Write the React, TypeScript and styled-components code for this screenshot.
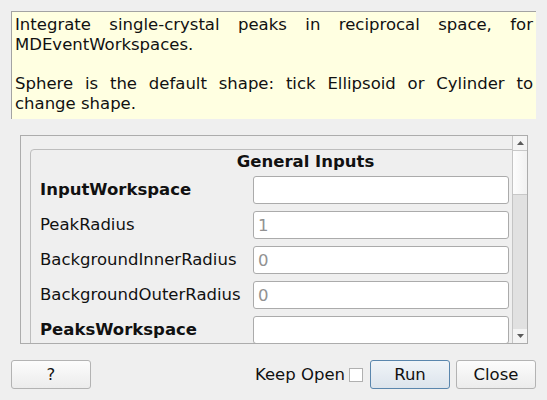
import React from 'react';
import styled, { createGlobalStyle } from 'styled-components';

const GlobalStyle = createGlobalStyle`
  html, body {
    margin: 0;
    padding: 0;
    background: #efefef;
  }
  body {
    font-family: "DejaVu Sans", Verdana, sans-serif;
    font-size: 16.5px;
    color: #1a1a1a;
  }
  * {
    box-sizing: border-box;
  }
`;

const Dialog = styled.div`
  width: 547px;
  height: 400px;
  padding: 11px;
  display: flex;
  flex-direction: column;
  background: #efefef;
  overflow: hidden;
`;

const Description = styled.div`
  height: 108px;
  background: #ffffe1;
  border-top: 1px solid #a3a3a3;
  border-left: 1px solid #a3a3a3;
  padding: 3px 3px 4px 3px;
  line-height: 19.75px;
  text-align: justify;
  color: #111;
`;

const Paragraph = styled.p`
  margin: 0;
  & + & {
    margin-top: 19.75px;
  }
`;

const ScrollFrame = styled.div`
  margin: 16px 8px 0 9px;
  height: 209px;
  border: 1px solid #acacac;
  display: flex;
  background: #efefef;
`;

const Viewport = styled.div`
  flex: 1;
  overflow: hidden;
  padding: 13px 0 0 9px;
`;

const GroupBox = styled.div`
  width: 550px;
  height: 260px;
  border: 1px solid #bdbdbd;
  border-radius: 4px;
  padding: 2px 0 0 9px;
`;

const GroupTitle = styled.div`
  width: 531px;
  text-align: center;
  font-weight: bold;
  line-height: 20px;
  margin-bottom: 4px;
  color: #111;
`;

const Form = styled.div`
  display: grid;
  grid-template-columns: 213px 256px;
  grid-auto-rows: 28px;
  row-gap: 7px;
`;

const Label = styled.div<{ $required?: boolean }>`
  display: flex;
  align-items: center;
  padding-bottom: 1px;
  font-weight: ${(p) => (p.$required ? 'bold' : 'normal')};
  color: #111;
  white-space: nowrap;
`;

const Field = styled.input`
  height: 28px;
  width: 256px;
  border: 1px solid #ababab;
  border-radius: 3px;
  background: #ffffff;
  padding: 0 4px;
  font-family: "DejaVu Sans", Verdana, sans-serif;
  font-size: 16.5px;
  color: #111;
  outline: none;
  &::placeholder {
    color: #929292;
  }
`;

const ScrollBar = styled.div`
  width: 15px;
  display: flex;
  flex-direction: column;
  border-left: 1px solid #c4c4c4;
  background: #e1e1e1;
`;

const ArrowButton = styled.div`
  height: 14px;
  background: #f4f4f4;
  display: flex;
  align-items: center;
  justify-content: center;
  color: #555;
`;

const Handle = styled.div`
  height: 45px;
  background: linear-gradient(to right, #fdfdfd, #f1f1f1);
  border-top: 1px solid #c8c8c8;
  border-bottom: 1px solid #c8c8c8;
`;

const Groove = styled.div`
  flex: 1;
`;

const ButtonRow = styled.div`
  margin-top: 16px;
  height: 29px;
  display: flex;
  align-items: center;
`;

const Spacer = styled.div`
  flex: 1;
`;

const Button = styled.button<{ $default?: boolean }>`
  width: 80px;
  height: 29px;
  border-radius: 3px;
  border: 1px solid ${(p) => (p.$default ? '#5a86ad' : '#b3b3b3')};
  background: ${(p) =>
    p.$default
      ? 'linear-gradient(#f0f4f8, #dce4ec)'
      : 'linear-gradient(#fcfcfc, #ececec)'};
  font-family: "DejaVu Sans", Verdana, sans-serif;
  font-size: 16.5px;
  color: #111;
  padding: 0;
  & + & {
    margin-left: 6px;
  }
`;

const KeepOpen = styled.label`
  display: flex;
  align-items: center;
  color: #111;
  margin-right: 7px;
`;

const CheckBox = styled.span`
  width: 14px;
  height: 14px;
  margin-left: 4px;
  border: 1px solid #b0b0b0;
  background: #ffffff;
`;

const Arrow: React.FC<{ down?: boolean }> = ({ down }) => (
  <svg width="7" height="4" viewBox="0 0 7 4">
    <polygon points={down ? '0,0 7,0 3.5,4' : '0,4 7,4 3.5,0'} fill="#5a5a5a" />
  </svg>
);

const fields = [
  { name: 'InputWorkspace', required: true, value: '' },
  { name: 'PeakRadius', required: false, value: '1' },
  { name: 'BackgroundInnerRadius', required: false, value: '0' },
  { name: 'BackgroundOuterRadius', required: false, value: '0' },
  { name: 'PeaksWorkspace', required: true, value: '' },
];

const App: React.FC = () => (
  <>
    <GlobalStyle />
    <Dialog>
      <Description>
        <Paragraph>
          Integrate single-crystal peaks in reciprocal space, for MDEventWorkspaces.
        </Paragraph>
        <Paragraph>
          Sphere is the default shape: tick Ellipsoid or Cylinder to change shape.
        </Paragraph>
      </Description>
      <ScrollFrame>
        <Viewport>
          <GroupBox>
            <GroupTitle>General Inputs</GroupTitle>
            <Form>
              {fields.map((f) => (
                <React.Fragment key={f.name}>
                  <Label $required={f.required}>{f.name}</Label>
                  <Field placeholder={f.value} readOnly />
                </React.Fragment>
              ))}
            </Form>
          </GroupBox>
        </Viewport>
        <ScrollBar>
          <ArrowButton>
            <Arrow />
          </ArrowButton>
          <Handle />
          <Groove />
          <ArrowButton>
            <Arrow down />
          </ArrowButton>
        </ScrollBar>
      </ScrollFrame>
      <ButtonRow>
        <Button>?</Button>
        <Spacer />
        <KeepOpen>
          Keep Open
          <CheckBox />
        </KeepOpen>
        <Button $default>Run</Button>
        <Button>Close</Button>
      </ButtonRow>
    </Dialog>
  </>
);

export default App;
